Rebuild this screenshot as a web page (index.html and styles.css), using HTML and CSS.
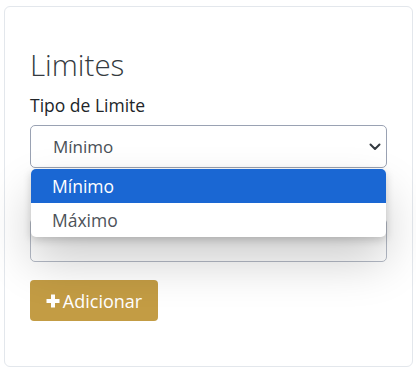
FILE: index.html
```html
<!DOCTYPE html>
<html lang="pt">
<head>
<meta charset="utf-8">
<link rel="stylesheet" href="styles.css">
</head>
<body>
<div class="card">
  <h3 class="title">Limites</h3>
  <label class="label">Tipo de Limite</label>
  <div class="select-wrap">
    <div class="select">
      <span>Mínimo</span>
      <svg class="chev" width="14" height="10" viewBox="0 0 14 10"><path d="M2.5 2.5l4.5 4.5 4.5-4.5" fill="none" stroke="#343a40" stroke-width="2" stroke-linecap="round" stroke-linejoin="round"/></svg>
    </div>
    <div class="menu">
      <div class="opt active">Mínimo</div>
      <div class="opt">Máximo</div>
    </div>
  </div>
  <div class="input"></div>
  <button class="btn"><svg class="plus" width="14" height="14" viewBox="0 0 14 14"><path d="M7 0.5v13M0.5 7h13" stroke="#fff" stroke-width="4" stroke-linecap="butt"/></svg>Adicionar</button>
</div>
</body>
</html>
```
FILE: styles.css
```css
html, body { margin: 0; padding: 0; background: #fff; }
body {
  font-family: "Open Sans", "Liberation Sans", sans-serif;
  padding: 6px 3px 4px 4px;
}
.card {
  border: 1px solid #e3e7ec;
  border-radius: 6px;
  padding: 40px 25px 45px 25px;
  height: 361px;
  box-sizing: border-box;
  display: flex;
  flex-direction: column;
  align-items: flex-start;
}
.title {
  margin: 0 0 11px 0;
  font-size: 29.5px;
  font-weight: 300;
  line-height: 1.2;
  color: #343a40;
}
.label {
  font-size: 17.5px;
  line-height: 24px;
  color: #212529;
  margin-bottom: 8px;
}
.select-wrap {
  position: relative;
  align-self: stretch;
  z-index: 2;
}
.select {
  height: 43px;
  box-sizing: border-box;
  border: 1px solid #9aa2b3;
  border-radius: 5px;
  display: flex;
  align-items: center;
  justify-content: space-between;
  padding: 0 4px 0 22px;
  font-size: 17px;
  color: #495057;
  background: #fff;
}
.chev { margin-top: 1px; }
.menu {
  position: absolute;
  top: calc(100% + 1px);
  left: 1px;
  right: 1px;
  background: #fff;
  border-radius: 5px;
  overflow: hidden;
  box-shadow: 0 24px 48px rgba(0,0,0,0.2), 0 3px 8px rgba(0,0,0,0.18);
}
.opt {
  height: 34px;
  line-height: 34px;
  padding-left: 21px;
  font-size: 17.5px;
  color: #4d5359;
}
.opt.active { background: #1a67d3; color: #fff; }
.input {
  align-self: stretch;
  margin-top: 50px;
  height: 44px;
  box-sizing: border-box;
  border: 1px solid #b4bac6;
  border-radius: 5px;
  background: #fff;
}
.btn {
  margin-top: 18px;
  width: 128px;
  height: 41px;
  border: none;
  border-radius: 4px;
  background: #c39c44;
  color: #fff;
  font-family: "Open Sans", "Liberation Sans", sans-serif;
  font-size: 18px;
  display: flex;
  align-items: center;
  justify-content: center;
  gap: 3px;
  padding: 0;
}
.plus { margin-top: 1px; }
```
